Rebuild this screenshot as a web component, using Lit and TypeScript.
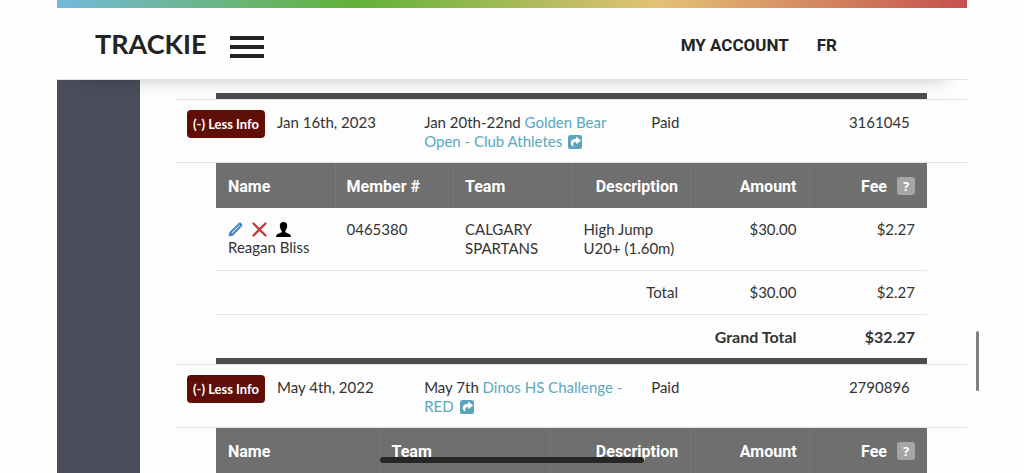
import { LitElement, html, css, svg, nothing } from "lit";
import { customElement, property } from "lit/decorators.js";

interface Column {
  label: string;
  kind?: "num" | "desc";
  width?: string;
}

interface Entry {
  name: string;
  member: string;
  team: string;
  description: string;
  amount: string;
  fee: string;
}

interface Order {
  id: string;
  date: string;
  eventDate: string;
  event: string;
  status: string;
  columns: Column[];
  entries: Entry[];
  total?: { amount: string; fee: string; grand: string };
}

const ORDERS: Order[] = [
  {
    id: "3161045",
    date: "Jan 16th, 2023",
    eventDate: "Jan 20th-22nd",
    event: "Golden Bear Open - Club Athletes",
    status: "Paid",
    columns: [
      { label: "Name" },
      { label: "Member #" },
      { label: "Team" },
      { label: "Description", kind: "desc" },
      { label: "Amount", kind: "num" },
      { label: "Fee", kind: "num" },
    ],
    entries: [
      {
        name: "Reagan Bliss",
        member: "0465380",
        team: "CALGARY SPARTANS",
        description: "High Jump U20+ (1.60m)",
        amount: "$30.00",
        fee: "$2.27",
      },
    ],
    total: { amount: "$30.00", fee: "$2.27", grand: "$32.27" },
  },
  {
    id: "2790896",
    date: "May 4th, 2022",
    eventDate: "May 7th",
    event: "Dinos HS Challenge - RED",
    status: "Paid",
    columns: [
      { label: "Name", width: "23%" },
      { label: "Team", width: "24%" },
      { label: "Description", kind: "desc", width: "19.7%" },
      { label: "Amount", kind: "num" },
      { label: "Fee", kind: "num" },
    ],
    entries: [],
  },
];

const shareIcon = svg`<svg class="share" viewBox="0 0 14 14" aria-hidden="true">
  <rect width="14" height="14" rx="2.6" fill="#5aa5bd"/>
  <path d="M8.2 1.6 13 5.4 8.2 9.2V7C5.4 6.9 4.5 8.4 5.4 12 1.4 9.2 1.6 3.9 8.2 3.8Z" fill="#fff"/>
</svg>`;

const pencilIcon = svg`<svg viewBox="0 0 15 15" width="15" height="15" aria-hidden="true">
  <path d="M.4 14.6 1.6 10 10.2 1.4Q11.8-.2 13.4 1.4T13.6 4.8L5 13.4Z" fill="#3a7fc8"/>
  <path d="M3.8 11.2 10.6 4.4" stroke="#dbe9f8" stroke-width="1.1"/>
  <path d="M10.2 2.4 12.6 4.8" stroke="#fff" stroke-width=".8"/>
</svg>`;

const crossIcon = svg`<svg viewBox="0 0 15 15" width="15" height="15" aria-hidden="true">
  <path d="M1.5 1.5 13.5 13.5M13.5 1.5 1.5 13.5" stroke="#c43c35" stroke-width="2.4" stroke-linecap="round"/>
</svg>`;

const personIcon = svg`<svg viewBox="0 0 15 15" width="15" height="15" aria-hidden="true">
  <path d="M7.5 0C9.9 0 11.3 1.6 11.2 4 11.1 6.2 10.2 7.8 9.3 8.7 9.1 10 9.6 10.6 11 11.1 13.6 12 15 12.6 15 15H0C0 12.6 1.4 12 4 11.1 5.4 10.6 5.9 10 5.7 8.7 4.8 7.8 3.9 6.2 3.8 4 3.7 1.6 5.1 0 7.5 0Z" fill="#000"/>
</svg>`;

@customElement("site-header")
class SiteHeader extends LitElement {
  static styles = css`
    :host {
      display: block;
      position: relative;
      z-index: 1;
      background: #fefefe;
      border-bottom: 1px solid #e3e3e3;
      box-shadow: 0 22px 18px -22px rgba(0, 0, 0, 0.22);
    }
    .stripe {
      height: 8px;
      background: linear-gradient(90deg, #74b9dc, #62b236 33%, #e4c276 66%, #c5504e);
    }
    .bar {
      display: flex;
      align-items: center;
      height: 71px;
      padding: 0 130px 0 38px;
      color: #232323;
    }
    a {
      color: inherit;
      text-decoration: none;
    }
    .logo {
      font: 700 27px/36px Lato, sans-serif;
    }
    .burger {
      display: grid;
      gap: 5px;
      margin: 6px 0 0 23px;
      padding: 0;
      width: 34px;
      border: 0;
      background: none;
    }
    .burger span {
      height: 4px;
      background: #232323;
    }
    nav {
      display: flex;
      gap: 28px;
      margin-left: auto;
      padding-top: 3px;
      font: 700 17px/24px Roboto, sans-serif;
    }
  `;

  render() {
    return html`
      <div class="stripe"></div>
      <div class="bar">
        <a class="logo" href="#">TRACKIE</a>
        <button class="burger" aria-label="Menu"><span></span><span></span><span></span></button>
        <nav><a href="#">MY ACCOUNT</a><a href="#">FR</a></nav>
      </div>
    `;
  }
}

@customElement("order-details")
class OrderDetails extends LitElement {
  @property({ attribute: false }) order!: Order;

  static styles = css`
    :host {
      display: block;
    }
    table {
      width: 100%;
      table-layout: fixed;
      border-collapse: separate;
      border-spacing: 0;
      border-bottom: 6px solid #4d4d4d;
    }
    th,
    td {
      box-sizing: border-box;
      padding: 12px;
      text-align: left;
      vertical-align: top;
    }
    th {
      padding: 13px 12px 11px;
      background: #6f6f6f;
      color: #fff;
      font: 700 16px/21px Roboto, sans-serif;
      white-space: nowrap;
    }
    th + th {
      border-left: 1px solid #777;
      padding-left: 11px;
    }
    td {
      border-bottom: 1px solid #e6e6e6;
      line-height: 19px;
    }
    .entry td {
      padding-right: 8px;
    }
    .entry .num,
    .num {
      padding-right: 12px;
      text-align: right;
    }
    .desc {
      text-align: right;
    }
    .grand td {
      border: 0;
      font-size: 16px;
      font-weight: 700;
    }
    .help {
      margin: 1px 0 0 10px;
      padding: 0;
      width: 18px;
      height: 18px;
      border: 0;
      border-radius: 3px;
      background: #a6a6a6;
      color: #fff;
      font: 700 13px/18px "Noto Sans", sans-serif;
      vertical-align: top;
    }
    .tools {
      display: flex;
      gap: 9px;
      height: 18px;
      align-items: center;
    }
    .tools button {
      display: flex;
      padding: 0;
      border: 0;
      background: none;
    }
  `;

  render() {
    const { columns, entries, total } = this.order;
    return html`
      <table>
        <thead>
          <tr>
            ${columns.map(
              (c) => html`<th class=${c.kind ?? ""} width=${c.width ?? nothing} scope="col">${c.label}${c.label === "Fee"
                ? html`<button class="help" aria-label="About fees">?</button>`
                : nothing}</th>`
            )}
          </tr>
        </thead>
        <tbody>
          ${entries.map(
            (e) => html`<tr class="entry">
              <td>
                <div class="tools">
                  <button aria-label="Edit">${pencilIcon}</button>
                  <button aria-label="Remove">${crossIcon}</button>
                  <button aria-label="Profile">${personIcon}</button>
                </div>
                ${e.name}
              </td>
              <td>${e.member}</td>
              <td>${e.team}</td>
              <td>${e.description}</td>
              <td class="num">${e.amount}</td>
              <td class="num">${e.fee}</td>
            </tr>`
          )}
        </tbody>
        ${total
          ? html`<tfoot>
              <tr>
                <td class="num" colspan="4">Total</td>
                <td class="num">${total.amount}</td>
                <td class="num">${total.fee}</td>
              </tr>
              <tr class="grand">
                <td class="num" colspan="5">Grand Total</td>
                <td class="num">${total.grand}</td>
              </tr>
            </tfoot>`
          : nothing}
      </table>
    `;
  }
}

@customElement("app-root")
class AppRoot extends LitElement {
  static styles = css`
    :host {
      display: block;
      height: 100vh;
      overflow: hidden;
      background: #fdfdfd;
      color: #333;
      font: 15px/19px Lato, sans-serif;
    }
    .page {
      display: flex;
      flex-direction: column;
      min-height: 100%;
      margin: 0 57px;
    }
    .body {
      display: flex;
      flex: 1;
    }
    .side {
      flex: none;
      width: 83px;
      background: #4b4d5c;
    }
    main {
      flex: 1;
      min-width: 0;
      padding: 13px 0 0 36px;
    }
    .previous {
      height: 6px;
      margin: 0 40px;
      background: #4d4d4d;
    }
    .orders {
      width: 100%;
      table-layout: fixed;
      border-collapse: separate;
      border-spacing: 0;
    }
    .toggle-col {
      width: 90px;
    }
    .date-col {
      width: 18.6%;
    }
    .event-col {
      width: 28.7%;
    }
    .status-col {
      width: 25%;
    }
    .order td {
      padding: 13px 0 11px 11px;
      border: solid #e3e3e3;
      border-width: 1px 0;
      vertical-align: top;
    }
    .order .toggle {
      padding: 10px 0 0 11px;
    }
    .toggle button {
      display: block;
      padding: 0 6px;
      height: 28px;
      border: 0;
      border-radius: 4px;
      background: #5f0f08;
      color: #fff;
      font: 700 13px/28px Lato, sans-serif;
      white-space: nowrap;
    }
    .details {
      padding: 0 40px;
    }
    a {
      color: #5aa8c0;
      text-decoration: none;
    }
    .share {
      width: 14px;
      height: 14px;
      margin-left: 6px;
      vertical-align: -2px;
    }
    .scroll-thumb {
      position: fixed;
      right: 45px;
      top: 331px;
      width: 3px;
      height: 60px;
      border-radius: 2px;
      background: #808080;
    }
    .home-indicator {
      position: fixed;
      bottom: 10px;
      left: 50%;
      width: 264px;
      height: 6px;
      border-radius: 3px;
      background: #262626;
      transform: translateX(-50%);
    }
  `;

  render() {
    return html`
      <div class="page">
        <site-header></site-header>
        <div class="body">
          <aside class="side"></aside>
          <main>
            <div class="previous"></div>
            <table class="orders">
              <colgroup>
                <col class="toggle-col" />
                <col class="date-col" />
                <col class="event-col" />
                <col class="status-col" />
                <col />
              </colgroup>
              <tbody>
                ${ORDERS.map(
                  (o) => html`
                    <tr class="order">
                      <td class="toggle"><button aria-expanded="true">(-) Less Info</button></td>
                      <td>${o.date}</td>
                      <td>${o.eventDate} <a href="#">${o.event}${shareIcon}</a></td>
                      <td>${o.status}</td>
                      <td>${o.id}</td>
                    </tr>
                    <tr>
                      <td class="details" colspan="5"><order-details .order=${o}></order-details></td>
                    </tr>
                  `
                )}
              </tbody>
            </table>
          </main>
        </div>
      </div>
      <div class="scroll-thumb"></div>
      <div class="home-indicator"></div>
    `;
  }
}
